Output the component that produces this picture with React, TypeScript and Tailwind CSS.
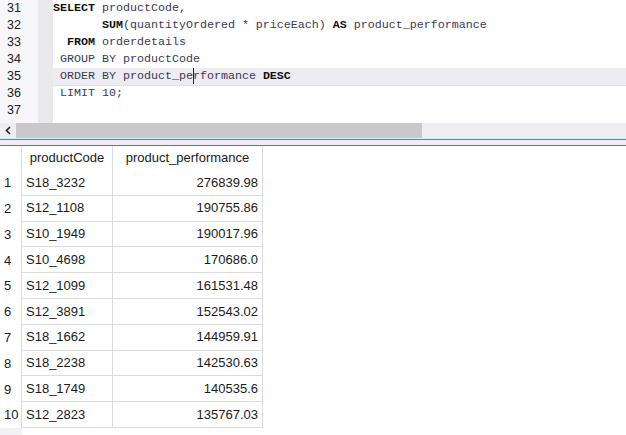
import React from 'react';

// query lines: [line number, leading spaces, tokens]
type Tok = { t: string; k?: boolean };

const codeLines: { n: number; pad: number; toks: Tok[] }[] = [
  { n: 31, pad: 0, toks: [{ t: 'SELECT', k: true }, { t: ' productCode,' }] },
  {
    n: 32,
    pad: 7,
    toks: [
      { t: 'SUM', k: true },
      { t: '(quantityOrdered * priceEach) ' },
      { t: 'AS', k: true },
      { t: ' product_performance' },
    ],
  },
  { n: 33, pad: 2, toks: [{ t: 'FROM', k: true }, { t: ' orderdetails' }] },
  { n: 34, pad: 1, toks: [{ t: 'GROUP BY' }, { t: ' productCode' }] },
  { n: 35, pad: 1, toks: [{ t: 'ORDER BY' }, { t: ' product_pe' }] },
  { n: 36, pad: 1, toks: [{ t: 'LIMIT 10;' }] },
  { n: 37, pad: 0, toks: [] },
];

const rows = [
  ['S18_3232', '276839.98'],
  ['S12_1108', '190755.86'],
  ['S10_1949', '190017.96'],
  ['S10_4698', '170686.0'],
  ['S12_1099', '161531.48'],
  ['S12_3891', '152543.02'],
  ['S18_1662', '144959.91'],
  ['S18_2238', '142530.63'],
  ['S18_1749', '140535.6'],
  ['S12_2823', '135767.03'],
];

export default function App() {
  return (
    <div className="w-[626px] h-[435px] bg-white overflow-hidden flex flex-col">
      {/* Editor */}
      <div className="flex h-[123px] shrink-0">
        <div className="flex shrink-0">
          <div className="w-[38px] bg-[#f7f7f9] flex flex-col font-['Liberation_Sans',sans-serif] text-[12.5px] text-[#222]">
            {codeLines.map((l) => (
              <div key={l.n} className="h-[17px] leading-[17px] pl-[7px]">
                {l.n}
              </div>
            ))}
          </div>
          <div className="w-[15px] bg-[#e9e9ec]" />
        </div>
        <div className="flex-1 flex flex-col font-['Courier_New','Liberation_Mono',monospace] text-[11.67px] text-[#3a3a55] whitespace-pre">
          {codeLines.map((l) => (
            <div
              key={l.n}
              className={
                l.n === 35
                  ? 'h-[17px] leading-[17px] bg-[#ececf2] border-b border-dotted border-[#d8d8e0] box-content -mb-px'
                  : 'h-[17px] leading-[17px]'
              }
            >
              {' '.repeat(l.pad)}
              {l.toks.map((tk, i) =>
                tk.k ? (
                  <span key={i} className="font-bold text-[#111]">
                    {tk.t}
                  </span>
                ) : (
                  <span key={i}>{tk.t}</span>
                )
              )}
              {l.n === 35 && (
                <>
                  <span className="inline-block w-px h-[16px] bg-[#222] align-top -mr-px" />
                  <span>rformance </span>
                  <span className="font-bold text-[#111]">DESC</span>
                </>
              )}
            </div>
          ))}
        </div>
      </div>

      {/* Horizontal scrollbar */}
      <div className="h-[15px] flex items-center bg-[#ededf2] shrink-0">
        <div className="w-[16px] flex justify-center">
          <svg width="7" height="9" viewBox="0 0 7 9">
            <path d="M5 1 L1.5 4.5 L5 8" stroke="#222" strokeWidth="1.6" fill="none" />
          </svg>
        </div>
        <div className="w-[406px] h-full bg-[#c9c9cd]" />
      </div>
      <div className="h-px bg-[#d4eff9] shrink-0" />
      <div className="h-px bg-[#6e7ea0] shrink-0" />
      <div className="h-[5px] bg-[#eeeef4] shrink-0" />
      <div className="h-px bg-[#6c6c82] shrink-0" />

      {/* Result grid */}
      <div className="shrink-0 font-['Liberation_Sans',sans-serif] text-[13px] text-[#1a1a1a]">
        <div className="flex h-[24px] items-center">
          <div className="w-[22px] h-full border-r border-[#dcdcdc]" />
          <div className="w-[91px] h-full border-r border-[#dcdcdc] flex items-center justify-center">
            productCode
          </div>
          <div className="w-[150px] h-full border-r border-[#dcdcdc] flex items-center justify-center">
            product_performance
          </div>
        </div>
        {rows.map((r, i) => (
          <div key={r[0]} className="flex h-[25.8px]">
            <div className="w-[22px] h-full flex items-center pl-[4px] border-r border-[#dcdcdc]">
              {i + 1}
            </div>
            <div className="w-[91px] h-full flex items-center pl-[4px] border-r border-b border-[#dcdcdc]">
              {r[0]}
            </div>
            <div className="w-[150px] h-full flex items-center justify-end pr-[4px] border-r border-b border-[#dcdcdc]">
              {r[1]}
            </div>
          </div>
        ))}
        <div className="w-[22px] h-[10px] bg-[#f1f1f4]" />
      </div>
    </div>
  );
}
